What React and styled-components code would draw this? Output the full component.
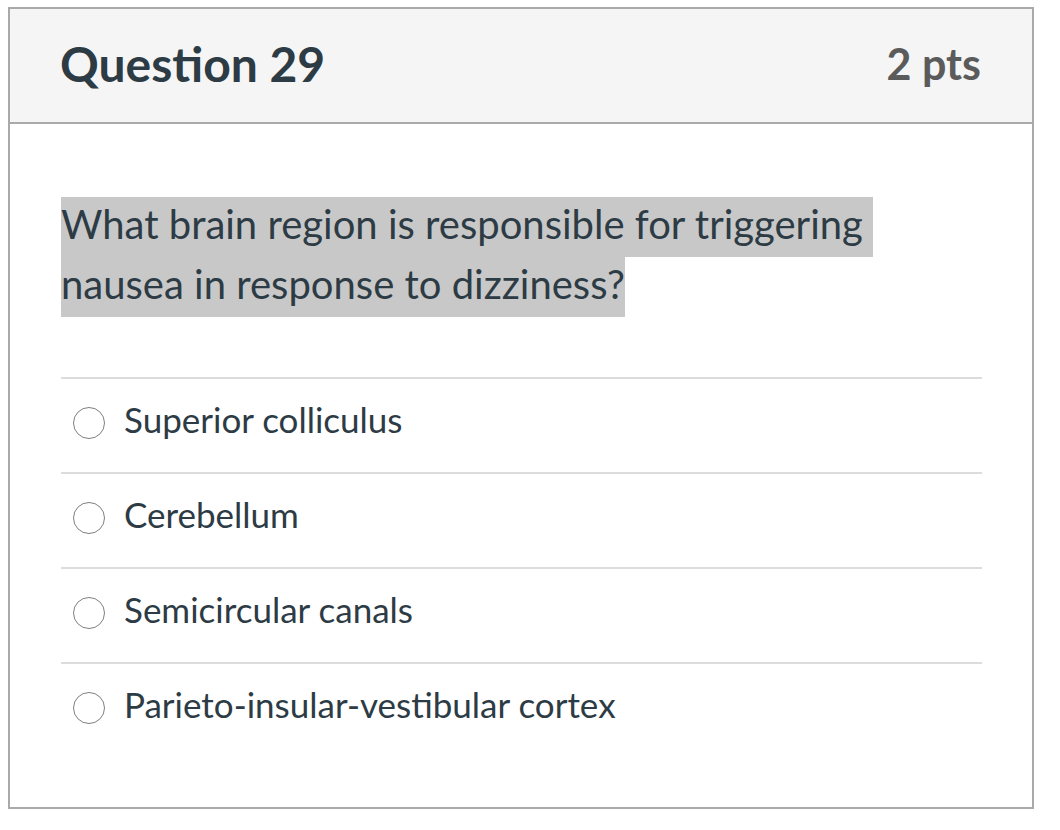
import React from "react";
import styled, { createGlobalStyle } from "styled-components";

const GlobalStyle = createGlobalStyle`
  body {
    margin: 7px 8px;
    background: #ffffff;
    font-family: Lato, "Open Sans", sans-serif;
    color: #2d3b45;
  }
`;

const Card = styled.div`
  width: 1026px;
  box-sizing: border-box;
  border: 2px solid #a9a9a9;
  background: #ffffff;
`;

const Header = styled.div`
  display: flex;
  align-items: center;
  justify-content: space-between;
  box-sizing: border-box;
  height: 115px;
  padding: 0 51px 4px 50px;
  background: #f5f5f5;
  border-bottom: 2px solid #a9a9a9;
`;

const Title = styled.h2`
  margin: 0;
  font-size: 48px;
  font-weight: 700;
  color: #2d3b45;
`;

const Points = styled.span`
  font-size: 43px;
  font-weight: 700;
  color: #5b5b5b;
`;

const Body = styled.div`
  padding: 70px 50px 50px 51px;
`;

const Prompt = styled.p`
  margin: 0 0 63px;
  font-size: 40px;
  line-height: 60px;
  color: #2d3b45;
`;

// looks like a text selection across both lines
const Selected = styled.span`
  background: #c8c8c8;
  padding: 3px 0 9px;
  box-decoration-break: clone;
  -webkit-box-decoration-break: clone;
`;

const Answers = styled.ul`
  list-style: none;
  margin: 0;
  padding: 0;
`;

const Answer = styled.li`
  display: flex;
  align-items: center;
  gap: 19px;
  box-sizing: border-box;
  height: 95px;
  padding: 0 0 14px 12px;
  border-top: 2px solid #dcdcdc;
  font-size: 35px;
  color: #2d3b45;
`;

const Radio = styled.span`
  width: 32px;
  height: 32px;
  box-sizing: border-box;
  border-radius: 50%;
  border: 1.5px solid #7f7f7f;
  background: #ffffff;
  flex-shrink: 0;
  margin-top: 8px;
`;

const answers = [
  "Superior colliculus",
  "Cerebellum",
  "Semicircular canals",
  "Parieto-insular-vestibular cortex",
];

export default function App() {
  return (
    <>
      <GlobalStyle />
      <Card>
        <Header>
          <Title>Question 29</Title>
          <Points>2 pts</Points>
        </Header>
        <Body>
          <Prompt>
            <Selected>
              What brain region is responsible for triggering{"\u00a0"} nausea in response to dizziness?
            </Selected>
          </Prompt>
          <Answers>
            {answers.map((a) => (
              <Answer key={a}>
                <Radio />
                {a}
              </Answer>
            ))}
          </Answers>
        </Body>
      </Card>
    </>
  );
}
